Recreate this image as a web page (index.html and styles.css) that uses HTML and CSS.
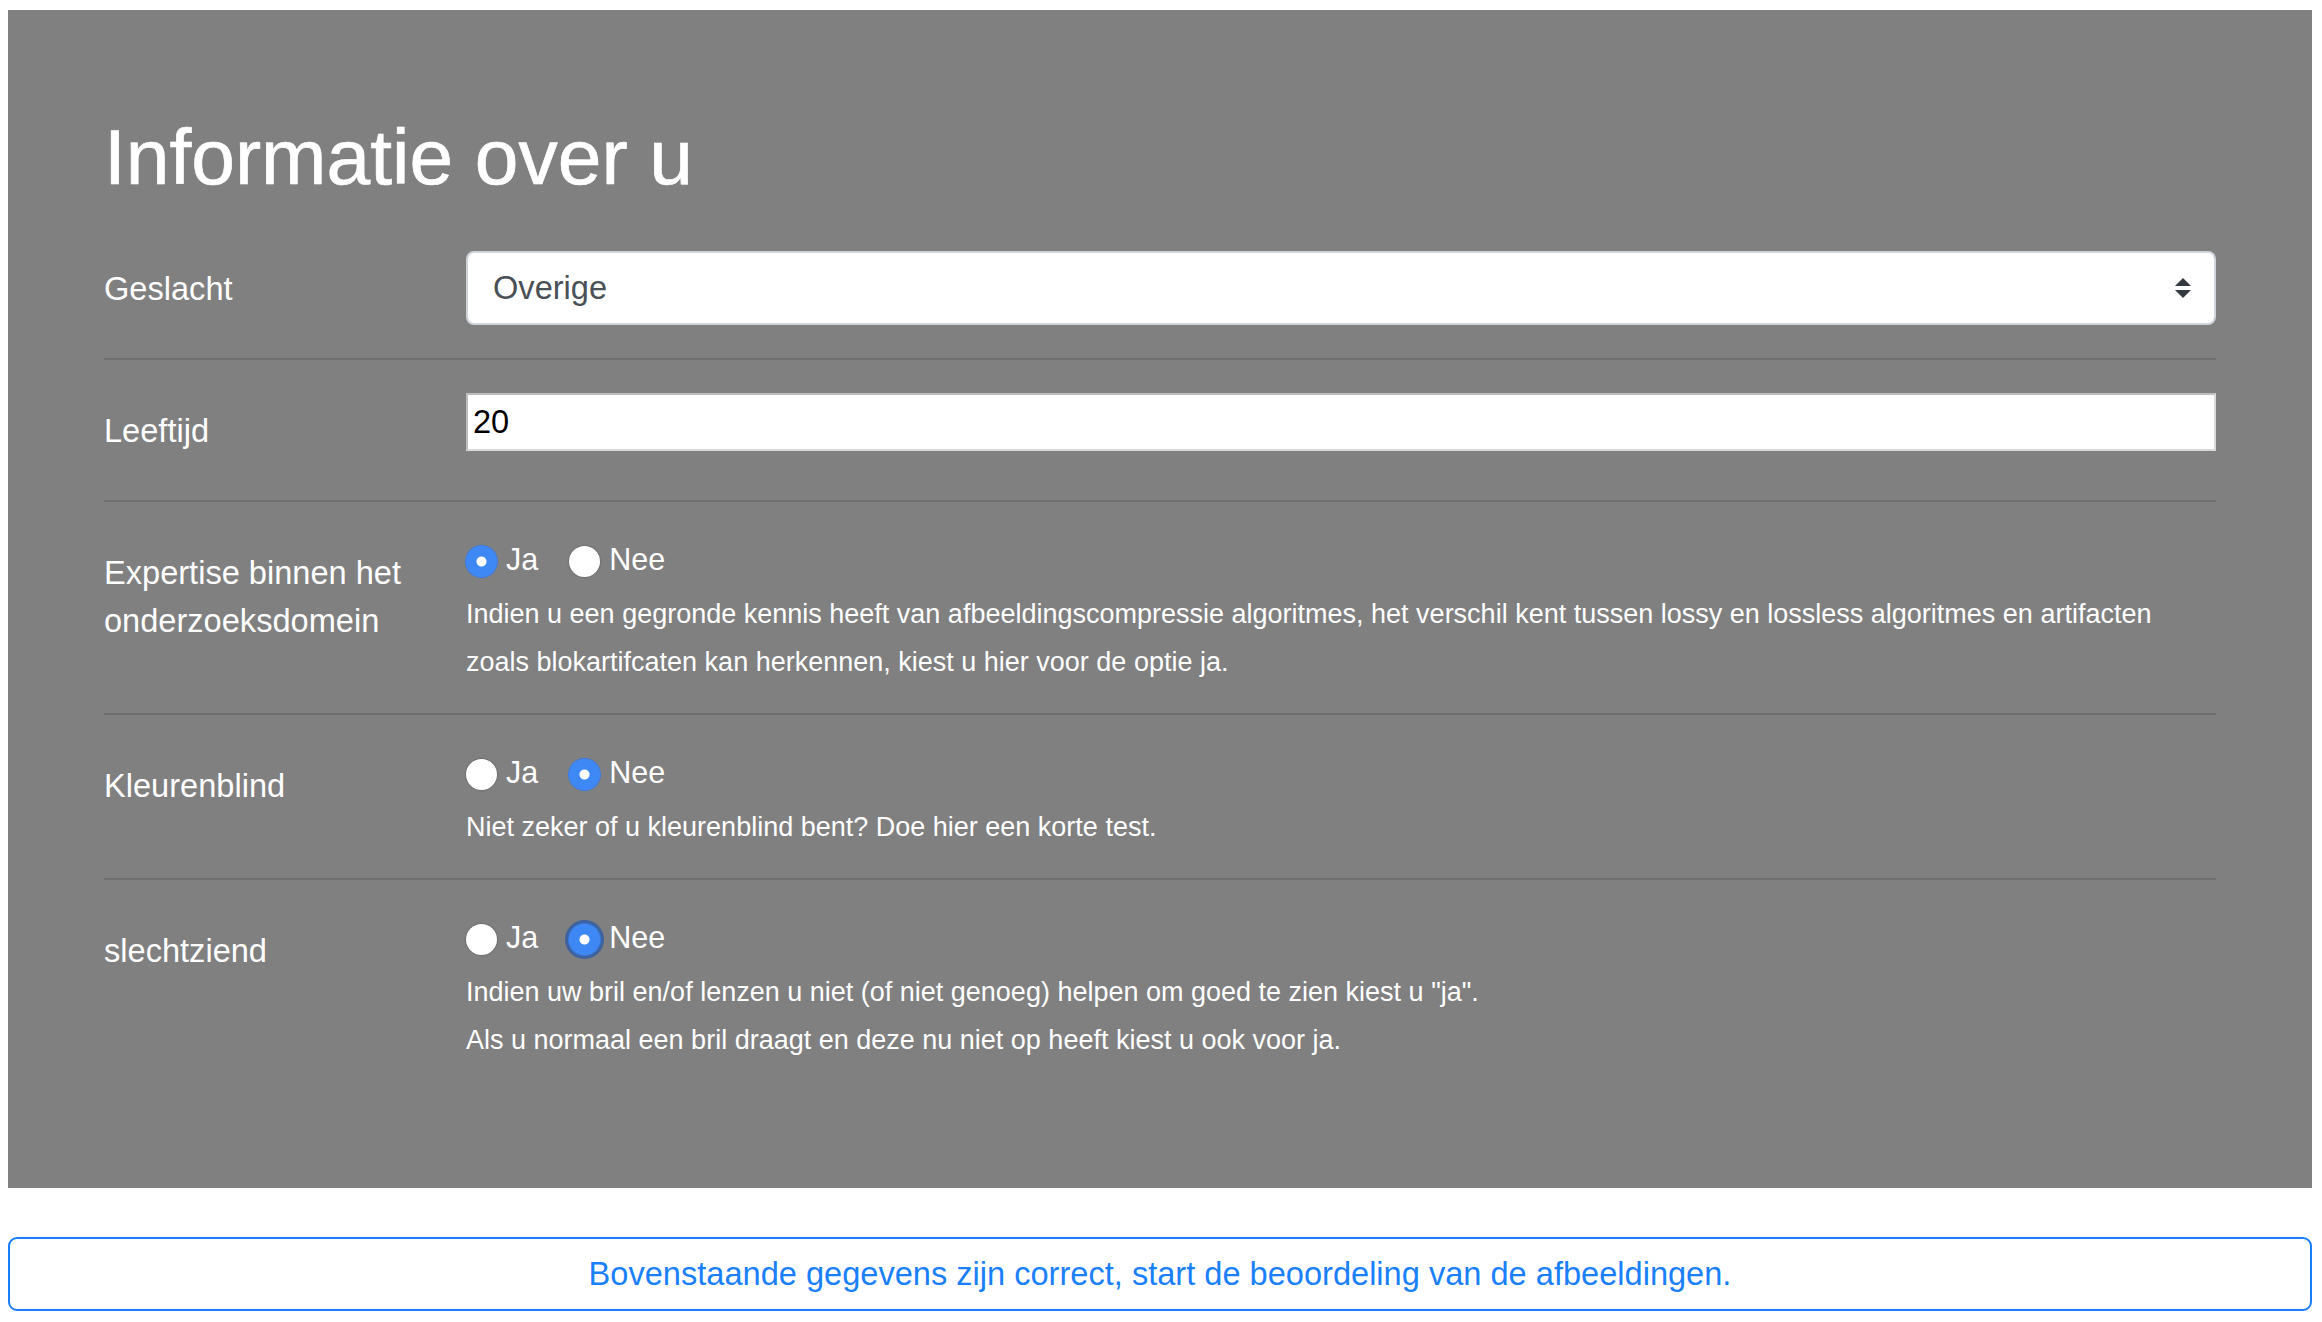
FILE: index.html
```html
<!DOCTYPE html>
<html lang="nl">
<head>
<meta charset="utf-8">
<title>Informatie over u</title>
<link rel="stylesheet" href="styles.css">
</head>
<body>
<form class="page">
  <section class="jumbo">
    <h1 class="title">Informatie over u</h1>

    <div class="form-row">
      <label class="col-label" for="geslacht">Geslacht</label>
      <div class="select-wrap">
        <select id="geslacht" class="select">
          <option>Man</option>
          <option>Vrouw</option>
          <option selected>Overige</option>
        </select>
        <svg class="select-arrow" width="16" height="20" viewBox="0 0 4 5" aria-hidden="true"><path fill="#343a40" d="M2 0L0 2h4zm0 5L0 3h4z"/></svg>
      </div>
    </div>
    <hr class="sep">

    <div class="form-row">
      <label class="col-label" for="leeftijd">Leeftijd</label>
      <input id="leeftijd" class="text-input" type="text" value="20">
    </div>
    <hr class="sep">

    <div class="form-row">
      <span class="col-label">Expertise binnen het onderzoeksdomein</span>
      <div class="field">
        <div class="radios">
          <label class="radio-opt"><input type="radio" name="expertise" class="radio" checked><span>Ja</span></label>
          <label class="radio-opt"><input type="radio" name="expertise" class="radio"><span>Nee</span></label>
        </div>
        <p class="help"><small>Indien u een gegronde kennis heeft van afbeeldingscompressie algoritmes, het verschil kent tussen lossy en lossless algoritmes en artifacten zoals blokartifcaten kan herkennen, kiest u hier voor de optie ja.</small></p>
      </div>
    </div>
    <hr class="sep">

    <div class="form-row">
      <span class="col-label">Kleurenblind</span>
      <div class="field">
        <div class="radios">
          <label class="radio-opt"><input type="radio" name="kleurenblind" class="radio"><span>Ja</span></label>
          <label class="radio-opt"><input type="radio" name="kleurenblind" class="radio" checked><span>Nee</span></label>
        </div>
        <p class="help"><small>Niet zeker of u kleurenblind bent? Doe hier een korte test.</small></p>
      </div>
    </div>
    <hr class="sep">

    <div class="form-row">
      <span class="col-label">slechtziend</span>
      <div class="field">
        <div class="radios">
          <label class="radio-opt"><input type="radio" name="slechtziend" class="radio"><span>Ja</span></label>
          <label class="radio-opt"><input type="radio" name="slechtziend" class="radio radio-focus" checked><span>Nee</span></label>
        </div>
        <p class="help"><small>Indien uw bril en/of lenzen u niet (of niet genoeg) helpen om goed te zien kiest u "ja".<br>Als u normaal een bril draagt en deze nu niet op heeft kiest u ook voor ja.</small></p>
      </div>
    </div>
  </section>

  <button type="button" class="btn-outline">Bovenstaande gegevens zijn correct, start de beoordeling van de afbeeldingen.</button>
</form>
</body>
</html>
```

FILE: styles.css
```css
* { box-sizing: border-box; }

html, body {
  margin: 0;
  padding: 0;
  background: #ffffff;
}

body {
  font-family: "Liberation Sans", Arial, sans-serif;
  font-size: 32.6px;
  line-height: 48px;
  color: #212529;
}

.page {
  margin: 10px 10px 0 8px;
}

.jumbo {
  background: #808080;
  padding: 99px 96px 97px 96px;
  color: #ffffff;
}

.title {
  margin: 0 0 46px 0;
  font-size: 78.5px;
  line-height: 96px;
  font-weight: 400;
  color: #ffffff;
  -webkit-text-stroke: 0.7px #ffffff;
}

.form-row {
  display: grid;
  grid-template-columns: 362px 1fr;
  margin-bottom: 32px;
}

.col-label {
  display: block;
  padding: 14px 32px 13px 0;
  font-size: 32.6px;
  line-height: 48px;
  color: #ffffff;
}

.sep {
  margin: 0 0 33px 0;
  border: 0;
  border-top: 2px solid rgba(0, 0, 0, 0.13);
  height: 0;
}

.select-wrap {
  position: relative;
  height: 74px;
}

.select {
  -webkit-appearance: none;
  appearance: none;
  display: block;
  width: 100%;
  height: 74px;
  margin: 0;
  padding: 0 60px 0 25px;
  border: 2px solid #ced4da;
  border-radius: 8px;
  background: #ffffff;
  color: #495057;
  font-family: "Liberation Sans", Arial, sans-serif;
  font-size: 32.6px;
  line-height: 48px;
  outline: none;
}

.select-arrow {
  position: absolute;
  right: 25px;
  top: 27px;
  pointer-events: none;
}

.text-input {
  display: block;
  width: 100%;
  height: 58px;
  margin: 0;
  padding: 0 5px;
  border: 2px solid;
  border-color: #bdbdbd #d9d9d9 #d9d9d9 #bdbdbd;
  border-radius: 0;
  background: #ffffff;
  color: #000000;
  font-family: "Liberation Sans", Arial, sans-serif;
  font-size: 32.6px;
  outline: none;
}

.field {
  display: flex;
  flex-direction: column;
}

.radios {
  display: flex;
  height: 48px;
  margin-bottom: 2px;
}

.radio-opt {
  display: flex;
  align-items: flex-start;
  margin-right: 31px;
  font-size: 30.5px;
  line-height: 48px;
  color: #ffffff;
}

.radio {
  -webkit-appearance: none;
  appearance: none;
  flex: 0 0 auto;
  width: 31px;
  height: 31px;
  margin: 11px 9px 0 0;
  border-radius: 50%;
  background: #ffffff;
  box-shadow: 0 0 1.5px 0.5px rgba(0, 0, 0, 0.25);
  outline: none;
}

.radio:checked {
  background: radial-gradient(circle, #ffffff 0 4.5px, #3e88f6 5.5px);
  box-shadow: 0 0 0 1px #3479e6;
}

.radio-focus:checked {
  box-shadow: 0 0 0 1px #3479e6, 0 0 0 4px rgba(39, 88, 168, 0.75);
}

.help {
  margin: 0;
  font-size: 32.6px;
  line-height: 48px;
  color: #ffffff;
}

.help small {
  font-size: 27px;
  line-height: 1;
  vertical-align: -3px;
}

.btn-outline {
  display: block;
  width: 100%;
  margin: 49px 0 0 0;
  padding: 11px 24px;
  border: 2px solid #1a7ef8;
  border-radius: 9px;
  background: #ffffff;
  color: #1a7ffa;
  font-family: "Liberation Sans", Arial, sans-serif;
  font-size: 32.6px;
  line-height: 48px;
  text-align: center;
  cursor: pointer;
}
```
